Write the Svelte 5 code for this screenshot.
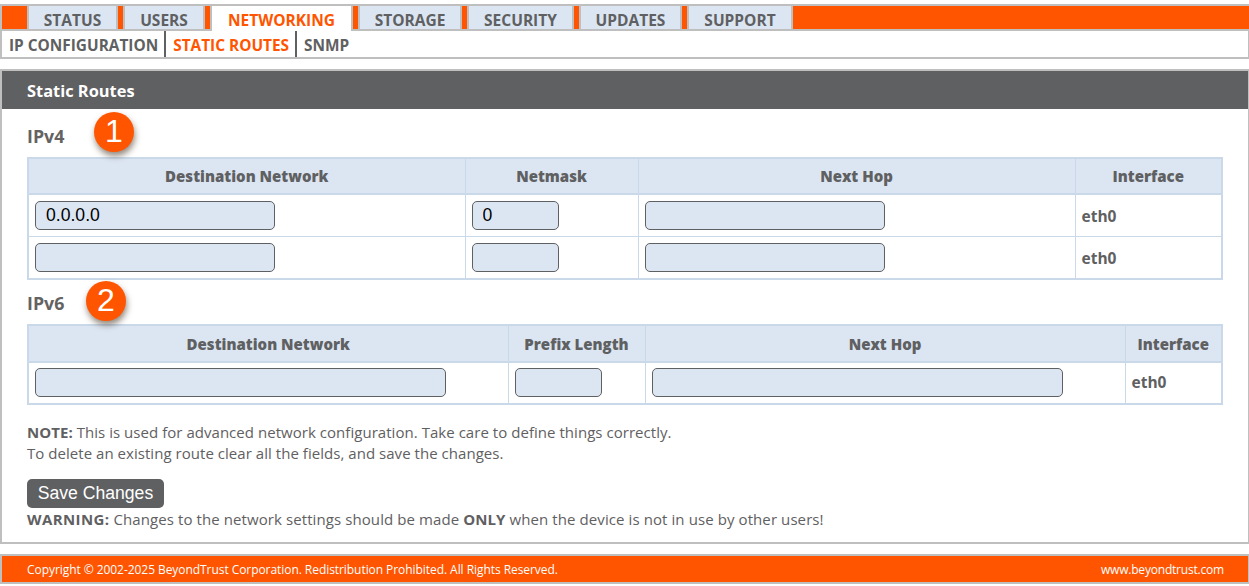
<script>
  const tabs = ['STATUS','USERS','NETWORKING','STORAGE','SECURITY','UPDATES','SUPPORT'];
  const subs = ['IP CONFIGURATION','STATIC ROUTES','SNMP'];
</script>

<div class="page">
  <nav class="tabs">
    {#each tabs as t}
      <span class="tab" class:on={t === 'NETWORKING'}>{t}</span>
    {/each}
  </nav>
  <nav class="subs">
    {#each subs as s}
      <span class="sub" class:on={s === 'STATIC ROUTES'}>{s}</span>
    {/each}
  </nav>

  <main class="panel">
    <h1>Static Routes</h1>
    <div class="body">
      <h2 class="h4">IPv4<span class="badge b1">1</span></h2>
      <table class="t4">
        <colgroup><col class="c1" /><col class="c2" /><col class="c3" /><col /></colgroup>
        <thead><tr><th>Destination Network</th><th>Netmask</th><th>Next Hop</th><th>Interface</th></tr></thead>
        <tbody>
          <tr>
            <td><input class="wide" value="0.0.0.0" /></td>
            <td><input class="small" value="0" /></td>
            <td><input class="wide" /></td>
            <td class="if">eth0</td>
          </tr>
          <tr>
            <td><input class="wide" /></td>
            <td><input class="small" /></td>
            <td><input class="wide" /></td>
            <td class="if">eth0</td>
          </tr>
        </tbody>
      </table>

      <h2 class="h6">IPv6<span class="badge b2">2</span></h2>
      <table class="t6">
        <colgroup><col class="c1" /><col class="c2" /><col class="c3" /><col /></colgroup>
        <thead><tr><th>Destination Network</th><th>Prefix Length</th><th>Next Hop</th><th>Interface</th></tr></thead>
        <tbody>
          <tr>
            <td><input class="xwide" /></td>
            <td><input class="small" /></td>
            <td><input class="xwide" /></td>
            <td class="if">eth0</td>
          </tr>
        </tbody>
      </table>

      <p class="note"><b>NOTE:</b> This is used for advanced network configuration. Take care to define things correctly.<br />To delete an existing route clear all the fields, and save the changes.</p>
      <button type="button">Save Changes</button>
      <p class="warn"><b>WARNING:</b> Changes to the network settings should be made <b>ONLY</b> when the device is not in use by other users!</p>
    </div>
  </main>

  <footer>
    <span class="copy">Copyright © 2002-2025 BeyondTrust Corporation. Redistribution Prohibited. All Rights Reserved.</span>
    <span class="url">www.beyondtrust.com</span>
  </footer>
</div>

<style>
  :global(body) { margin: 0; background: #fff; }
  .page {
    font-family: "Open Sans", "Noto Sans", sans-serif;
    color: #5f6062;
    padding-top: 4px;
    height: 582px;
    overflow: hidden;
  }
  .tabs {
    display: flex;
    height: 23px;
    background: #ff5500;
    border: 2px solid #bfbfbf;
    border-right: none;
    padding-left: 25px;
    gap: 5px;
  }
  .tab {
    box-sizing: border-box;
    display: flex;
    align-items: center;
    justify-content: center;
    padding-top: 4px;
    height: 23px;
    background: #dce6f2;
    border-left: 2px solid #bfbfbf;
    border-right: 2px solid #bfbfbf;
    font-size: 15.5px;
    font-weight: 700;
  }
  .tab:nth-child(1) { width: 91px; }
  .tab:nth-child(2) { width: 82px; }
  .tab:nth-child(3) { width: 143px; }
  .tab:nth-child(4) { width: 104px; }
  .tab:nth-child(5) { width: 107px; }
  .tab:nth-child(6) { width: 103px; }
  .tab:nth-child(7) { width: 106px; }
  .tab.on {
    background: #fff;
    color: #ff5500;
    height: 25px;
    padding-bottom: 2px;
    position: relative;
    z-index: 1;
  }
  .subs {
    display: flex;
    height: 26px;
    margin-right: -1px;
    border: 2px solid #bfbfbf;
    border-top: none;
    align-items: stretch;
  }
  .sub {
    display: flex;
    align-items: center;
    padding: 2px 6px 0 7px;
    font-size: 15.4px;
    font-weight: 700;
    border-right: 2px solid #5f6062;
  }
  .sub:last-child { border-right: none; }
  .sub.on { color: #ff5500; }
  .panel {
    box-sizing: border-box;
    margin: 10px -1px 0 0;
    border: 2px solid #bfbfbf;
    height: 475px;
  }
  h1 {
    margin: 0;
    height: 38px;
    line-height: 40px;
    padding-left: 25px;
    background: #5f6062;
    color: #fff;
    font-size: 16.4px;
    font-weight: 700;
  }
  .body { padding: 0 25px; }
  h2 {
    position: relative;
    margin: 0;
    font-size: 17.8px;
    font-weight: 700;
    line-height: 22px;
    color: #646362;
  }
  .h4 { padding-top: 16px; margin-bottom: 10px; }
  .h6 { margin-top: 1px; padding-top: 11px; margin-bottom: 10px; }
  .badge {
    position: absolute;
    width: 40px;
    height: 40px;
    border-radius: 50%;
    background: #ff5500;
    color: #fff;
    font-family: "Liberation Sans", Arial, sans-serif;
    font-weight: 400;
    font-size: 32px;
    line-height: 38px;
    text-align: center;
    box-shadow: 1px 4px 6px rgba(60, 40, 20, 0.55);
  }
  .b1 { left: 67px; top: 3px; }
  .b2 { left: 59px; top: 0; }
  table {
    width: 1196px;
    border-collapse: collapse;
    table-layout: fixed;
    border: 2px solid #c9d9ea;
  }
  th {
    height: 34px;
    padding: 0;
    background: #dce6f2;
    border: 1px solid #c9d9ea;
    border-bottom-width: 2px;
    font-size: 15px;
    font-weight: 800;
    color: #5f6062;
  }
  td {
    padding: 0 0 0 6px;
    border: 1px solid #c9d9ea;
    height: 42px;
    box-sizing: border-box;
  }
  .t4 tr:last-child td { height: 43px; }
  .t4 .c1 { width: 437px; }
  .t4 .c2 { width: 173px; }
  .t4 .c3 { width: 437px; }
  .t6 th { height: 35px; }
  .t6 td { padding-bottom: 2px; }
  .t6 .c1 { width: 480px; }
  .t6 .c2 { width: 137px; }
  .t6 .c3 { width: 480px; }
  .if { padding-top: 2px; font-size: 15.5px; font-weight: 700; }
  .t6 .if { padding-top: 0; }
  input {
    box-sizing: border-box;
    display: block;
    height: 29px;
    padding: 0 10px;
    background: #dce6f2;
    border: 1px solid #5f6062;
    border-radius: 5px;
    font-family: "Liberation Sans", Arial, sans-serif;
    font-size: 17.6px;
    color: #000;
  }
  .wide { width: 240px; }
  .small { width: 87px; }
  .xwide { width: 411px; }
  p {
    margin: 0;
    font-size: 15px;
    line-height: 21px;
  }
  .note { margin-top: 17px; letter-spacing: 0.04px; }
  b { font-weight: 700; }
  button {
    display: block;
    margin-top: 15px;
    width: 137px;
    height: 29px;
    padding: 0;
    background: #5f6062;
    color: #fff;
    border: none;
    border-radius: 5px;
    font-family: "Liberation Sans", Arial, sans-serif;
    font-size: 17.6px;
  }
  .warn { margin-top: 1px; letter-spacing: 0.09px; }
  .warn b:first-child { letter-spacing: 0.4px; }
  footer {
    display: flex;
    justify-content: space-between;
    align-items: center;
    margin: 10px -1px 0 0;
    height: 26px;
    padding: 0 24px 0 25px;
    background: #ff5500;
    border: 2px solid #bfbfbf;
    color: #fff;
    font-size: 12px;
  }
  .copy { letter-spacing: -0.06px; }
  .url { letter-spacing: -0.2px; }
</style>
